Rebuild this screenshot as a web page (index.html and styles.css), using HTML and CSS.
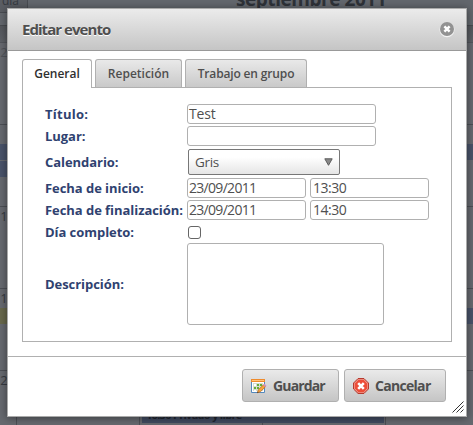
FILE: index.html
```html
<!DOCTYPE html>
<html lang="es">
<head>
<meta charset="utf-8">
<title>Editar evento</title>
<link rel="stylesheet" href="styles.css">
</head>
<body>
<div class="calendar">
  <div class="toolbar"><span class="view">día</span><h1>septiembre 2011</h1></div>
  <div class="weekdays"></div>
  <div class="week"><div class="day dim">29</div><div class="day"></div><div class="day"></div><div class="day"></div><div class="day"></div></div>
  <div class="week"><div class="day">5<i class="event"></i><i class="event"></i></div><div class="day"></div><div class="day"></div><div class="day"></div><div class="day"><i class="event alone"></i></div></div>
  <div class="week"><div class="day">12</div><div class="day"></div><div class="day"></div><div class="day"></div><div class="day"></div></div>
  <div class="week"><div class="day">19<i class="event yellow"></i></div><div class="day"></div><div class="day"></div><div class="day"></div><div class="day"><i class="event alone"></i></div></div>
  <div class="week"><div class="day">26</div><div class="day"></div><div class="day"><div class="entry">16:30 Privado y libre</div></div><div class="day"></div><div class="day"></div></div>
</div>
<div class="dialog">
  <header>
    <h2>Editar evento</h2>
    <svg class="close" viewBox="0 0 16 17" width="16" height="17">
      <circle cx="8" cy="8.8" r="7.5" fill="#f4f4f4"/><circle cx="8" cy="8" r="7" fill="#929292"/>
      <path d="M5.4 5.4l5.2 5.2M10.6 5.4l-5.2 5.2" stroke="#fff" stroke-width="2.5"/>
    </svg>
  </header>
  <main>
    <nav>
      <div class="tab active">General</div>
      <div class="tab">Repetición</div>
      <div class="tab group">Trabajo en grupo</div>
    </nav>
    <form class="panel">
      <div class="row"><label class="spaced">Título:</label><div class="field wide">Test</div></div>
      <div class="row"><label>Lugar:</label><div class="field wide"></div></div>
      <div class="row tall"><label>Calendario:</label><div class="select"><span>Gris</span><svg width="9" height="8" viewBox="0 0 9 8"><path d="M.8.8h7.4L4.5 7.3z" fill="#888" stroke="#5c5c5c"/></svg></div></div>
      <div class="row"><label>Fecha de inicio:</label><div class="field date">23/09/2011</div><div class="field time">13:30</div></div>
      <div class="row"><label>Fecha de finalización:</label><div class="field date">23/09/2011</div><div class="field time">14:30</div></div>
      <div class="row"><label>Día completo:</label><div class="check"></div></div>
      <div class="row area"><label>Descripción:</label><div class="textarea"></div></div>
    </form>
  </main>
  <footer>
    <div class="button">
      <svg width="16" height="16" viewBox="0 0 16 16">
        <path d="M.5 1.5h13v13H.5z" fill="#fff" stroke="#5489bd"/>
        <path d="M0 1h14v3H0z" fill="#ee8b2d"/><path d="M1 2h12v1H1z" fill="#ffc37b"/>
        <path d="M2 5h10v8H2z" fill="#d5ddd0"/>
        <path d="M6 6h2v2H6zM9 6h2v2H9zM3 9h2v2H3zM6 9h2v2H6z" fill="#67ad35"/>
        <path d="M3 6h2v2H3zM3 12h2v1H3z" fill="#fff"/>
        <path d="M6.5 14.8l.8-3 5.2-5 2 2-5.2 5z" fill="#f7a43a" stroke="#b96a25" stroke-width=".8"/>
        <path d="M12.2 7l1.3-1.3 2 2L14.2 9z" fill="#cf8fc2"/><path d="M6.2 15l.4-1.5 1.1 1.1z" fill="#333"/>
      </svg>
      <span>Guardar</span>
    </div>
    <div class="button cancel">
      <svg width="16" height="16" viewBox="0 0 16 16">
        <path d="M5 .6h6L15.4 5v6L11 15.4H5L.6 11V5z" fill="#f3a99c" stroke="#b22c20"/>
        <path d="M5.4 1.8h5.2l3.6 3.6v5.2l-3.6 3.6H5.4l-3.6-3.6V5.4z" fill="#ed4d38"/>
        <path d="M5.2 5.2l5.6 5.6M10.8 5.2l-5.6 5.6" stroke="#fff" stroke-width="2.6"/>
      </svg>
      <span>Cancelar</span>
    </div>
  </footer>
  <svg class="grip" width="12" height="12" viewBox="0 0 12 12"><path d="M.5 11.5l11-11M4.5 11.5l7-7M8.5 11.5l3-3" stroke="#333" fill="none"/></svg>
</div>
</body>
</html>
```
FILE: styles.css
```css
* { box-sizing: border-box; }
body {
  margin: 0; width: 473px; height: 425px; overflow: hidden; position: relative;
  background: #66696f; color: #4f4f4f;
  font: 14px/18px "Open Sans", "Noto Sans", sans-serif;
}
h1, h2 { margin: 0; }
.calendar { height: 425px; overflow: hidden; color: #363a41; }
.toolbar { height: 25px; display: flex; align-items: flex-start; background: #63676d; }
.view {
  width: 28px; height: 13px; border-right: 1px solid #494c52; border-bottom: 1px solid #494c52;
  background: #5a5d63; font-size: 12px; line-height: 2px; padding: 0 0 0 2px;
}
.toolbar h1 { margin-left: 208px; margin-top: -14px; font-size: 19px; line-height: 26px; white-space: nowrap; color: #2e3238; letter-spacing: -.45px; }
.weekdays { height: 18px; border-top: 1px solid #484b50; border-bottom: 1px solid #53565c; background: linear-gradient(#54575c, #5d6066); }
.week { height: 82px; display: grid; grid-template-columns: repeat(5, 123px); margin-left: -106px; }
.day { border-right: 1px solid #4c4f55; border-bottom: 1px solid #4c4f55; text-align: right; font-size: 13px; line-height: 18px; min-width: 0; }
.day:first-child { padding-right: 1px; }
.dim { color: #51545a; }
.event { display: block; height: 16px; background: #49536a; margin: 1px 0 0; }
.alone { margin-top: 19px; }
.yellow { background: #68684c; }
.entry {
  width: 242px; height: 17px; margin: 35px 0 0 2px; padding-left: 4px; background: #414b60; color: #20252f;
  text-align: left; font-weight: 700; font-size: 11px; line-height: 17px; letter-spacing: -.7px; white-space: nowrap;
}
.dialog {
  position: absolute; left: 7px; top: 8px; width: 460px; height: 409px;
  border: 1px solid #aaa; background: #fff; box-shadow: 0 1px 8px rgba(0,0,0,.45);
  display: flex; flex-direction: column;
}
header {
  height: 42px; flex: none; display: flex; align-items: center; justify-content: space-between;
  padding: 0 11px 1px 14px; border-bottom: 1px solid #999; background: linear-gradient(#ebebeb, #c5c5c5);
}
h2 { font-size: 15px; line-height: 20px; letter-spacing: -.95px; text-shadow: 0 1px #fff; }
main { padding: 8px 14px 0; }
nav { display: flex; gap: 3px; height: 28px; }
.tab {
  width: 87px; height: 28px; border: 1px solid #b0b0b0; border-bottom: 0; border-radius: 3px 3px 0 0;
  background: linear-gradient(#e9e9e9, #c9c9c9); text-align: center;
  font-size: 12px; font-weight: 600; line-height: 28px; white-space: nowrap;
}
.tab.active { width: 70px; height: 29px; background: #fff; color: #303030; position: relative; }
.tab.group { width: 122px; letter-spacing: -.15px; }
.panel { height: 255px; border: 1px solid #b0b0b0; padding: 16px 0 0 22px; }
.row { display: flex; align-items: center; height: 20px; margin-bottom: 2px; }
.row label { width: 142px; flex: none; color: #2f4270; font-weight: 700; white-space: nowrap; font-size: 13px; letter-spacing: -.05px; }
.row .spaced { letter-spacing: .25px; }
.field, .textarea { border: 1px solid #b0b0b0; border-radius: 3px; background: #fff; }
.field { height: 20px; padding-left: 1px; font-size: 14px; line-height: 18px; letter-spacing: -.7px; }
.wide { width: 189px; letter-spacing: -.2px; }
.date { width: 119px; }
.time { width: 119px; margin-left: 4px; padding-left: 2px; letter-spacing: -.5px; }
.tall { height: 28px; }
.select {
  width: 152px; height: 26px; margin-left: 1px; padding: 0 6px; border: 1px solid #777; border-radius: 2px;
  background: linear-gradient(#fff 30%, #e5e5e5); display: flex; align-items: center; justify-content: space-between; font-size: 13.5px; letter-spacing: -.3px;
}
.check { width: 13px; height: 13px; margin-left: 1px; border: 1px solid #666; border-radius: 3px; }
.area { height: 82px; margin-top: -1px; }
.textarea { width: 197px; height: 82px; }
footer { margin-top: 14px; height: 60px; border-top: 1px solid #b0b0b0; display: flex; justify-content: flex-end; gap: 5px; padding: 12px 20px 0 0; }
.button {
  height: 33px; width: 97px; border: 1px solid #b0b0b0; border-radius: 3px; display: flex; align-items: center;
  gap: 6px; padding-left: 8px; background: linear-gradient(#eaeaea, #c5c5c5);
  font-weight: 700; font-size: 14px; white-space: nowrap; letter-spacing: -.85px;
}
.cancel { width: 102px; letter-spacing: -.7px; }
.grip { position: absolute; right: 2px; bottom: 3px; }
```
